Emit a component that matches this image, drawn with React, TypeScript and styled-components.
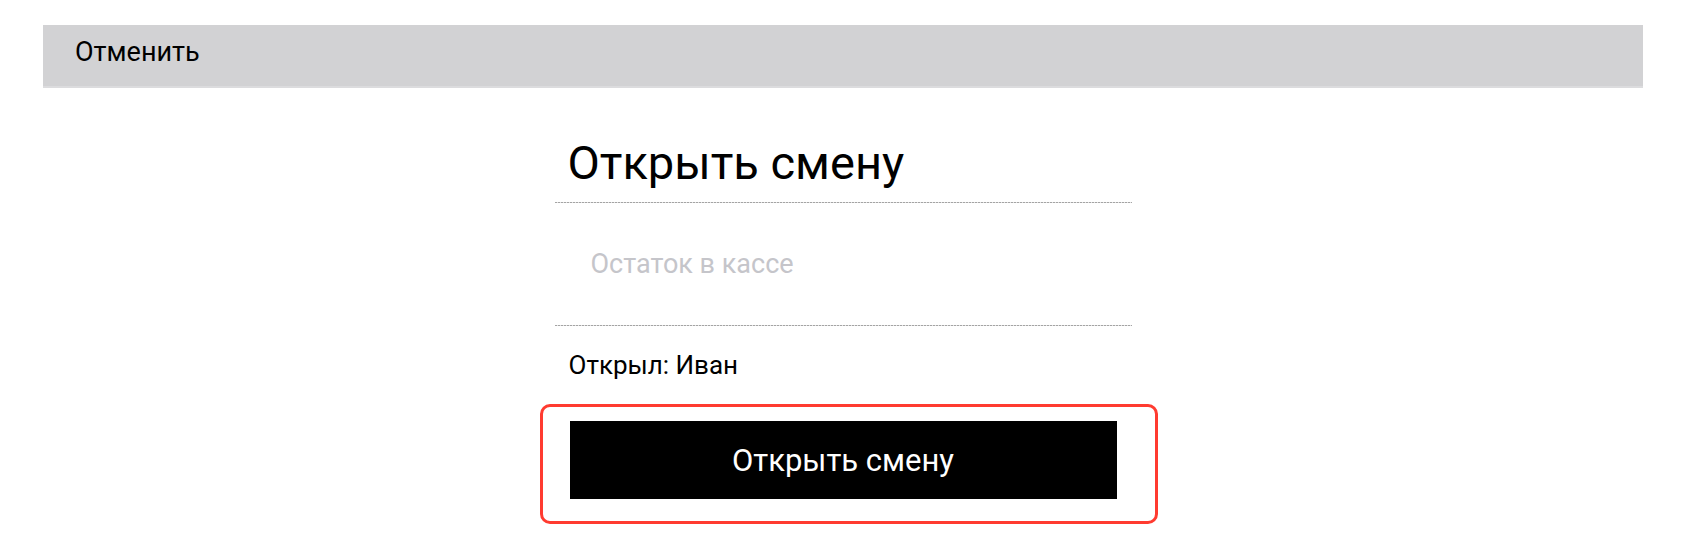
import React from 'react';
import styled, { createGlobalStyle } from 'styled-components';

const GlobalStyle = createGlobalStyle`
  body {
    margin: 0;
    background: #fff;
    font-family: Roboto, 'Liberation Sans', sans-serif;
    color: #000;
  }
`;

const Page = styled.div`
  width: 1600px;
  padding: 25px 0 0 43px;
`;

const TopBar = styled.div`
  height: 63px;
  box-sizing: border-box;
  padding: 11px 0 0 32px;
  background: #d2d2d4;
  border-bottom: 2px solid #dcdcde;
`;

const CancelButton = styled.button`
  padding: 0;
  border: none;
  background: none;
  font-family: inherit;
  font-size: 27px;
  color: #000;
  cursor: pointer;
`;

const Form = styled.div`
  width: 577px;
  margin: 0 auto;
  display: flex;
  flex-direction: column;
`;

const Title = styled.h1`
  margin: 48px 0 0;
  padding-left: 13px;
  font-size: 47px;
  font-weight: 400;
  line-height: 54px;
`;

const Divider = styled.div<{ $gap?: number }>`
  height: 1px;
  margin-top: ${({ $gap }) => $gap ?? 0}px;
  background: repeating-linear-gradient(
    to right,
    #a4a4a4 0,
    #a4a4a4 2px,
    #e2e2e2 2px,
    #e2e2e2 3px
  );
`;

const Field = styled.div`
  padding: 46px 0;
`;

const Input = styled.input`
  display: block;
  width: 100%;
  height: 30px;
  box-sizing: border-box;
  padding: 0 0 0 36px;
  border: none;
  outline: none;
  background: transparent;
  font-family: inherit;
  font-size: 27px;
  line-height: 30px;
  color: #000;

  &::placeholder {
    color: #c5c5ca;
  }
`;

const Caption = styled.p`
  margin: 24px 0 0;
  padding-left: 14px;
  font-size: 26px;
`;

const Highlight = styled.div`
  margin: 24px -26px 0 -15px;
  padding: 14px 38px 22px 27px;
  border: 3px solid #ff3b30;
  border-radius: 10px;
`;

const SubmitButton = styled.button`
  display: flex;
  align-items: center;
  justify-content: center;
  width: 100%;
  height: 78px;
  border: none;
  border-radius: 0;
  background: #000;
  color: #fff;
  font-family: inherit;
  font-size: 31px;
  cursor: pointer;
`;

export default function App() {
  return (
    <>
      <GlobalStyle />
      <Page>
        <TopBar>
          <CancelButton>Отменить</CancelButton>
        </TopBar>
        <Form>
          <Title>Открыть смену</Title>
          <Divider $gap={12} />
          <Field>
            <Input placeholder="Остаток в кассе" />
          </Field>
          <Divider />
          <Caption>Открыл: Иван</Caption>
          <Highlight>
            <SubmitButton>Открыть смену</SubmitButton>
          </Highlight>
        </Form>
      </Page>
    </>
  );
}
